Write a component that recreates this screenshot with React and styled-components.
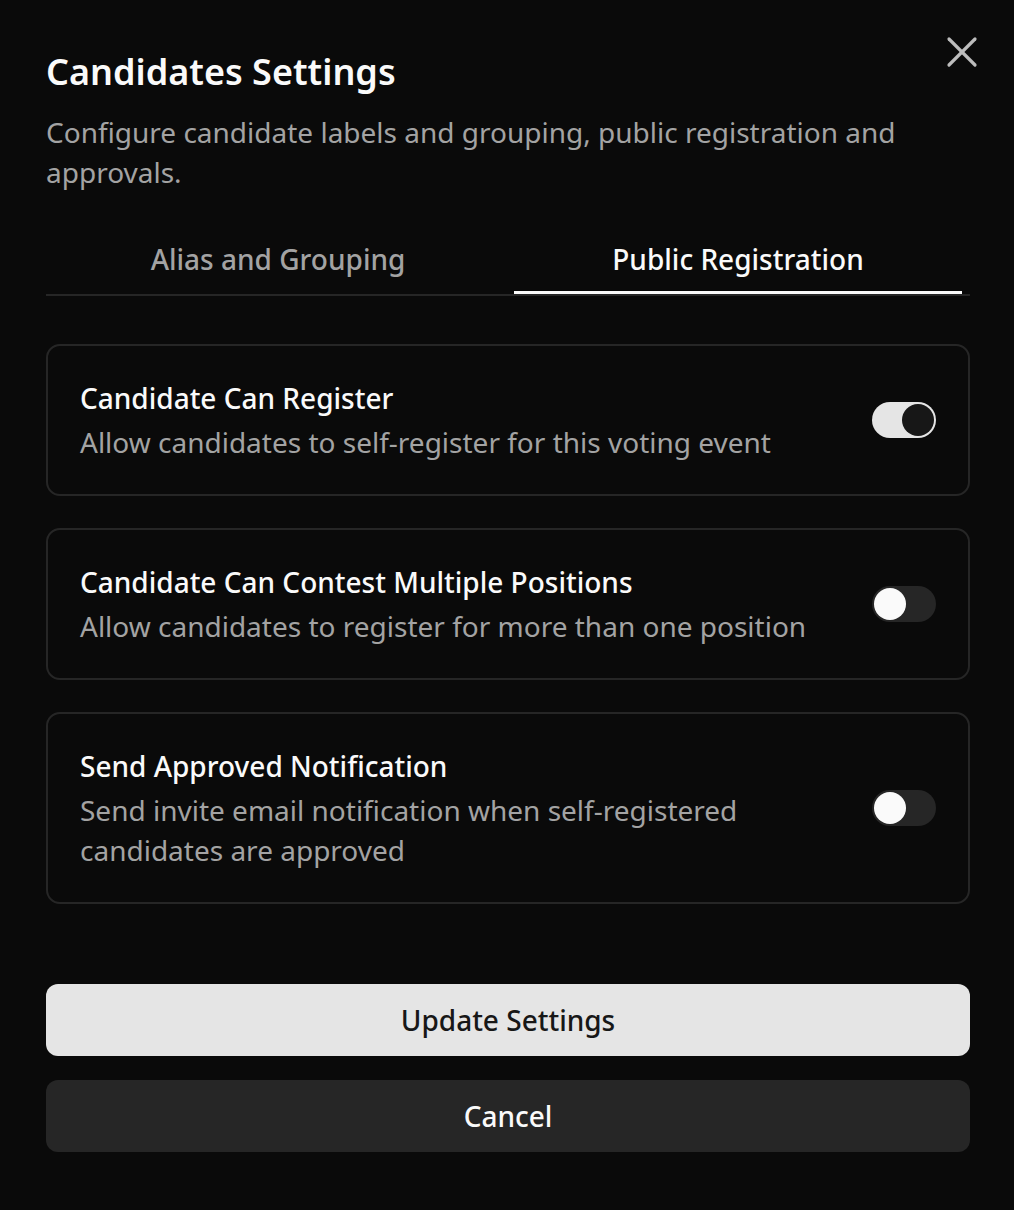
import React, { useState } from "react";
import styled, { createGlobalStyle } from "styled-components";

const Global = createGlobalStyle`
  html, body { margin: 0; padding: 0; background: #0a0a0a; }
  body { font-family: "Noto Sans", "Open Sans", sans-serif; color: #fafafa; }
  * { box-sizing: border-box; }
`;

const Dialog = styled.div`
  position: relative;
  width: 1014px;
  min-height: 1210px;
  background: #0a0a0a;
  padding: 44px 44px 0 46px;
  display: flex;
  flex-direction: column;
`;

const CloseButton = styled.button`
  position: absolute;
  top: 34px;
  right: 34px;
  width: 36px;
  height: 36px;
  padding: 0;
  border: none;
  background: transparent;
  color: #bdbdbd;
  display: flex;
  align-items: center;
  justify-content: center;
  cursor: pointer;
`;

const Title = styled.h2`
  margin: 0;
  font-size: 36px;
  line-height: 56px;
  font-weight: 600;
  color: #fafafa;
`;

const Description = styled.p`
  margin: 12px 0 0;
  font-size: 28px;
  line-height: 40px;
  color: #a3a3a3;
  max-width: 900px;
`;

const TabList = styled.div`
  margin-top: 38px;
  display: flex;
  gap: 12px;
  padding: 0 8px;
  border-bottom: 2px solid #262626;
`;

const Tab = styled.button`
  flex: 1;
  height: 64px;
  padding: 0 0 3px;
  border: none;
  background: transparent;
  font-family: inherit;
  font-size: 28px;
  font-weight: 500;
  line-height: 40px;
  color: ${(p) => (p.$active ? "#fafafa" : "#a3a3a3")};
  border-bottom: 3px solid ${(p) => (p.$active ? "#fafafa" : "transparent")};
  cursor: pointer;
`;

const Cards = styled.div`
  margin-top: 48px;
  display: flex;
  flex-direction: column;
  gap: 32px;
`;

const Card = styled.div`
  border: 2px solid #262626;
  border-radius: 14px;
  padding: 32px;
  display: flex;
  align-items: center;
  justify-content: space-between;
  gap: 32px;
`;

const CardText = styled.div`
  display: flex;
  flex-direction: column;
  gap: 4px;
`;

const CardTitle = styled.div`
  font-size: 28px;
  line-height: 40px;
  font-weight: 500;
  color: #fafafa;
`;

const CardDesc = styled.div`
  font-size: 28px;
  line-height: 40px;
  color: #a3a3a3;
`;

const SwitchTrack = styled.button`
  flex: none;
  width: 64px;
  height: 36px;
  border-radius: 18px;
  border: none;
  padding: 2px;
  background: ${(p) => (p.$on ? "#e5e5e5" : "#262626")};
  display: flex;
  justify-content: ${(p) => (p.$on ? "flex-end" : "flex-start")};
  cursor: pointer;
`;

const SwitchThumb = styled.span`
  width: 32px;
  height: 32px;
  border-radius: 50%;
  background: ${(p) => (p.$on ? "#171717" : "#fafafa")};
`;

const Actions = styled.div`
  margin-top: 80px;
  display: flex;
  flex-direction: column;
  gap: 24px;
`;

const Button = styled.button`
  height: 72px;
  width: 100%;
  border: none;
  border-radius: 12px;
  font-family: inherit;
  font-size: 28px;
  font-weight: 500;
  background: ${(p) => (p.$primary ? "#e5e5e5" : "#262626")};
  color: ${(p) => (p.$primary ? "#171717" : "#fafafa")};
  cursor: pointer;
`;

const settings = [
  {
    title: "Candidate Can Register",
    desc: "Allow candidates to self-register for this voting event",
    on: true,
  },
  {
    title: "Candidate Can Contest Multiple Positions",
    desc: "Allow candidates to register for more than one position",
    on: false,
  },
  {
    title: "Send Approved Notification",
    desc: "Send invite email notification when self-registered candidates are approved",
    on: false,
  },
];

function Switch({ on, onToggle }) {
  return (
    <SwitchTrack $on={on} onClick={onToggle} role="switch" aria-checked={on}>
      <SwitchThumb $on={on} />
    </SwitchTrack>
  );
}

export default function App() {
  const [tab, setTab] = useState(1);
  const [vals, setVals] = useState(settings.map((s) => s.on));
  return (
    <>
      <Global />
      <Dialog>
        <CloseButton aria-label="Close">
          <svg width="36" height="36" viewBox="0 0 36 36" fill="none" stroke="currentColor" strokeWidth="3.2" strokeLinecap="round">
            <line x1="5" y1="5" x2="31" y2="31" />
            <line x1="31" y1="5" x2="5" y2="31" />
          </svg>
        </CloseButton>
        <Title>Candidates Settings</Title>
        <Description>
          Configure candidate labels and grouping, public registration and approvals.
        </Description>
        <TabList>
          <Tab $active={tab === 0} onClick={() => setTab(0)}>Alias and Grouping</Tab>
          <Tab $active={tab === 1} onClick={() => setTab(1)}>Public Registration</Tab>
        </TabList>
        <Cards>
          {settings.map((s, i) => (
            <Card key={s.title}>
              <CardText>
                <CardTitle>{s.title}</CardTitle>
                <CardDesc>{s.desc}</CardDesc>
              </CardText>
              <Switch
                on={vals[i]}
                onToggle={() => setVals(vals.map((v, j) => (j === i ? !v : v)))}
              />
            </Card>
          ))}
        </Cards>
        <Actions>
          <Button $primary>Update Settings</Button>
          <Button>Cancel</Button>
        </Actions>
      </Dialog>
    </>
  );
}
